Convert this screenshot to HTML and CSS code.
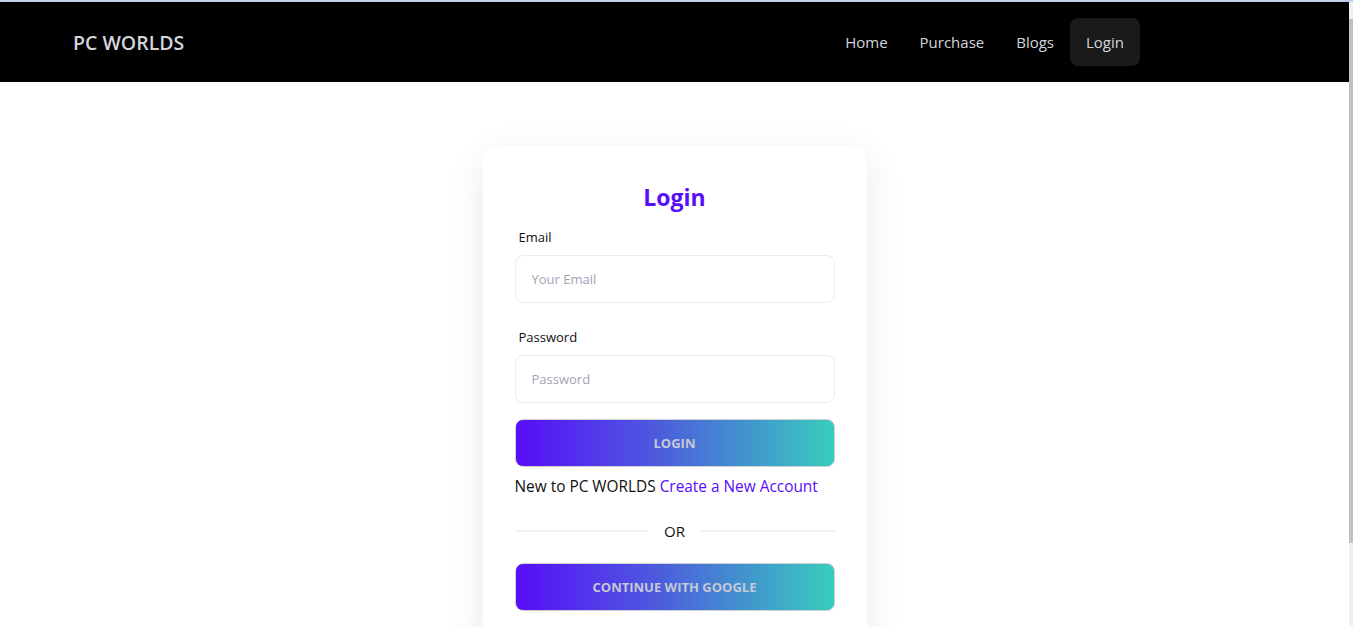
FILE: index.html
```html
<!DOCTYPE html>
<html lang="en">
<head>
<meta charset="utf-8">
<title>PC WORLDS - Login</title>
<link rel="stylesheet" href="styles.css">
</head>
<body>
<div class="topline"></div>
<div class="frame">
  <div class="page">
    <header class="navbar">
      <a class="brand" href="#">PC WORLDS</a>
      <nav class="menu">
        <a class="menu-item" href="#">Home</a>
        <a class="menu-item" href="#">Purchase</a>
        <a class="menu-item" href="#">Blogs</a>
        <a class="menu-item active" href="#">Login</a>
      </nav>
    </header>
    <main class="main">
      <section class="card">
        <h2 class="card-title">Login</h2>
        <form class="form">
          <label class="label" for="email">Email</label>
          <input class="input" id="email" type="email" placeholder="Your Email">
          <label class="label label-gap" for="password">Password</label>
          <input class="input" id="password" type="password" placeholder="Password">
          <button class="btn btn-first" type="button">Login</button>
        </form>
        <p class="signup">New to PC WORLDS <a class="link" href="#">Create a New Account</a></p>
        <div class="divider"><span>OR</span></div>
        <button class="btn" type="button">Continue with Google</button>
      </section>
    </main>
  </div>
  <div class="scrollbar"><div class="thumb"></div></div>
</div>
</body>
</html>
```
FILE: styles.css
```css
* { box-sizing: border-box; }
html, body {
  margin: 0;
  padding: 0;
  height: 100%;
  overflow: hidden;
  background: #ffffff;
  font-family: "Open Sans", "Noto Sans", sans-serif;
}
.topline {
  height: 2px;
  background: #bfcfe6;
}
.frame {
  display: flex;
  height: calc(100% - 2px);
}
.page {
  flex: 1;
  min-width: 0;
}
.scrollbar {
  width: 4px;
  background: #f1f1f1;
  padding-top: 17px;
}
.thumb {
  height: 524px;
  background: #c1c1c1;
}
.navbar {
  height: 80px;
  background: #000000;
  display: flex;
  align-items: center;
  justify-content: space-between;
  padding: 0 209px 0 73px;
}
.brand {
  color: #d3d6dc;
  text-decoration: none;
  font-size: 19.5px;
  font-weight: 600;
}
.menu {
  display: flex;
  align-items: center;
}
.menu-item {
  display: block;
  height: 48px;
  line-height: 48px;
  padding: 0 16px;
  border-radius: 8px;
  color: #d3d6dc;
  text-decoration: none;
  font-size: 15px;
}
.menu-item.active {
  background: #1a1a1a;
}
.main {
  display: flex;
  justify-content: center;
  padding-top: 64px;
}
.card {
  width: 384px;
  background: #ffffff;
  border-radius: 16px;
  box-shadow: 0 12px 40px rgba(0, 0, 0, 0.09);
  padding: 32px 32px 32px;
  display: flex;
  flex-direction: column;
}
.card-title {
  margin: 0;
  text-align: center;
  color: #570df8;
  font-size: 23px;
  font-weight: 700;
  line-height: 38px;
}
.form {
  display: flex;
  flex-direction: column;
}
.label {
  display: block;
  margin-top: 11px;
  padding-left: 4px;
  height: 20px;
  line-height: 20px;
  font-size: 13px;
  color: #111111;
}
.label.label-gap {
  margin-top: 24px;
}
.input {
  margin-top: 8px;
  height: 48px;
  width: 100%;
  border: 1px solid #ececef;
  border-radius: 8px;
  padding: 0 16px;
  font-family: inherit;
  font-size: 13px;
  color: #1f2937;
  background: #ffffff;
  outline: none;
}
.input::placeholder {
  color: #9fa3b4;
}
.btn {
  height: 48px;
  width: 100%;
  border: 1px solid #cfcfd4;
  border-radius: 8px;
  background: linear-gradient(90deg, #570df8 0%, #4c5ddd 45%, #37cdbe 100%);
  color: #c6c8d4;
  font-family: inherit;
  font-size: 13px;
  font-weight: 700;
  text-transform: uppercase;
  cursor: pointer;
}
.btn-first {
  margin-top: 16px;
}
.signup {
  margin: 8px 0 0;
  line-height: 24px;
  font-size: 15.4px;
  color: #111111;
}
.link {
  color: #570df8;
  text-decoration: none;
}
.divider {
  margin-top: 20px;
  margin-bottom: 20px;
  display: flex;
  align-items: center;
  gap: 16px;
  line-height: 24px;
  font-size: 15px;
  color: #111111;
}
.divider::before,
.divider::after {
  content: "";
  flex: 1;
  height: 2px;
  background: #f3f3f4;
}
```
